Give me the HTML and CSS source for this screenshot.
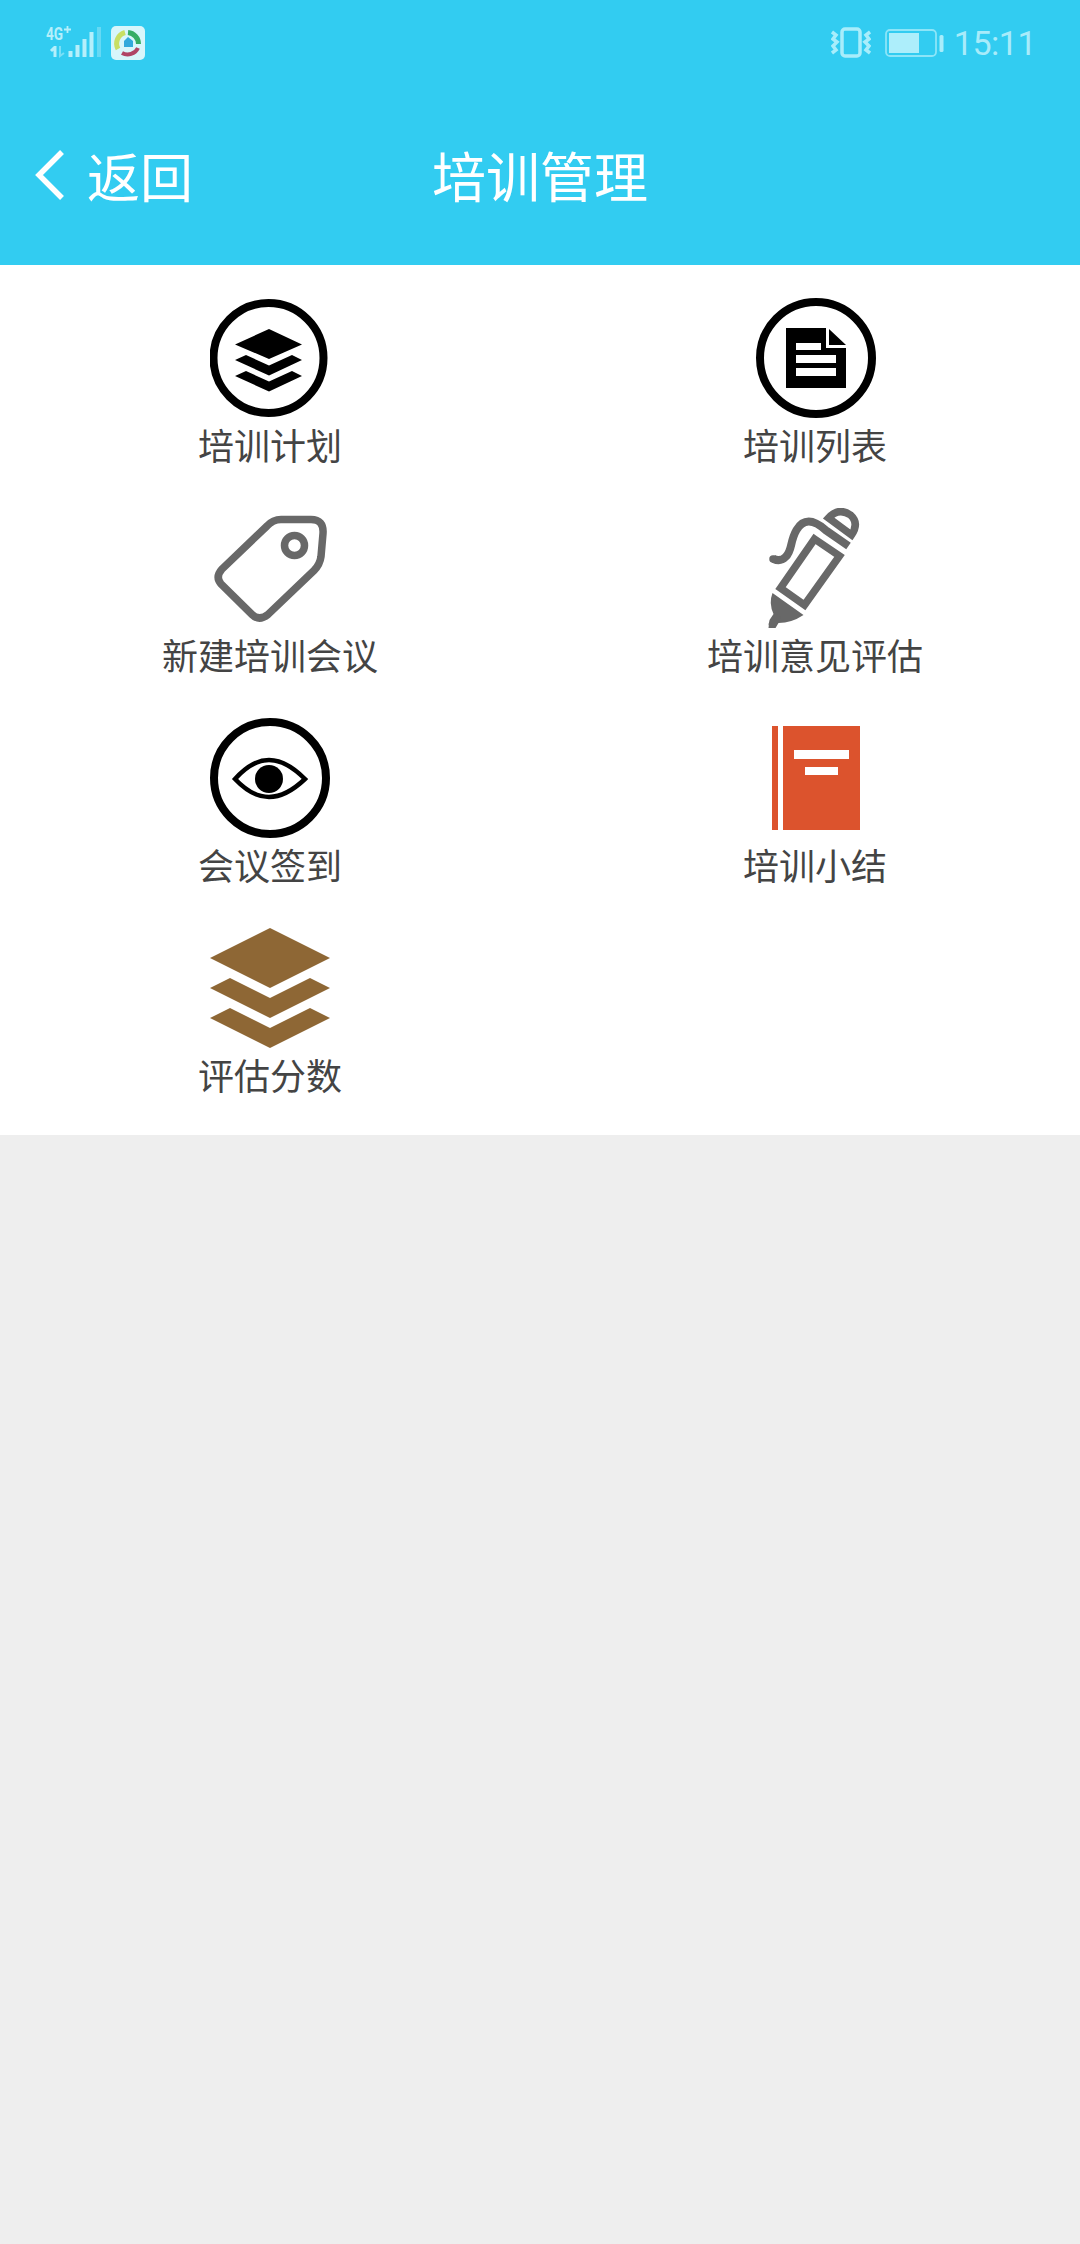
FILE: index.html
```
<!DOCTYPE html>
<html lang="zh-CN">
<head>
    <meta charset="UTF-8">
    <meta name="viewport" content="width=device-width, initial-scale=1.0">
    <title>培训管理</title>
    <link rel="stylesheet" href="styles.css">
</head>
<body>
    <header>
        <div class="status-bar">
            <div class="status-left">
                <svg width="60" height="40" viewBox="0 0 60 40" class="signal">
                    <text x="1" y="17" textLength="17" lengthAdjust="spacingAndGlyphs" class="net">4G</text>
                    <path d="M19 6.500h7M22.500 3v7" stroke="#b5effb" stroke-width="1.800"/>
                    <path d="M10 23v11M6 28l4-4" stroke="#b5effb" stroke-width="3" fill="none"/>
                    <path d="M15 23v10l4-3" stroke="#7adff6" stroke-width="2" fill="none"/>
                    <path d="M25.500 28v6M32.500 22v12M39.500 16v18M46.500 9v25" stroke="#b5effb" stroke-width="4"/>
                    <path d="M54 4v30" stroke="#66d9f4" stroke-width="4"/>
                </svg>
                <svg width="36" height="36" viewBox="0 0 36 36" class="app-icon">
                    <rect x="1" y="1" width="34" height="34" rx="5" fill="#d8f6fb"/>
                    <g fill="none" stroke-width="5">
                        <path d="M8 24A11.500 11.500 0 0 1 15 7.500" stroke="#c8df63"/>
                        <path d="M18 7.500A11.500 11.500 0 0 1 28.500 19" stroke="#36ad65"/>
                        <path d="M28 23A11.500 11.500 0 0 1 12 28" stroke="#b04465" stroke-width="4"/>
                    </g>
                    <path d="M14 16l4-4 5 4v6h-9z" fill="#31a9dc"/>
                </svg>
            </div>
            <div class="status-right">
                <svg width="40" height="32" viewBox="0 0 40 32" fill="none" stroke="#a8edfb">
                    <rect x="11" y="2" width="18" height="27" rx="3" stroke-width="3.500"/>
                    <path d="M1 5l4 3-3 4 4 3-4 4 3 4-4 3M39 5l-4 3 3 4-4 3 4 4-3 4 4 3" stroke-width="3.500"/>
                </svg>
                <svg width="60" height="30" viewBox="0 0 60 30">
                    <rect x="2" y="2" width="50" height="26" rx="4" fill="none" stroke="#8ce5f8" stroke-width="1.800"/>
                    <rect x="5" y="5" width="30" height="20" fill="#adeefb"/>
                    <rect x="55.500" y="7" width="4" height="17" rx="1.500" fill="#a8edfb"/>
                </svg>
                <span class="time">15:11</span>
            </div>
        </div>
        <nav>
            <a class="back">
                <svg width="32" height="54" viewBox="0 0 32 54">
                    <path d="M28 4L5 27l23 23" fill="none" stroke="#fff" stroke-width="5.500"/>
                </svg>
                <span>返回</span>
            </a>
            <h1>培训管理</h1>
        </nav>
    </header>

    <div class="menu">
        <a class="item">
            <svg viewBox="0 0 120 120">
                <circle cx="58.500" cy="60" r="55" fill="none" stroke="#000" stroke-width="8"/>
                <path d="M59 31l33 15.500L59 61 25 46.500zM36 57l23 10.500L82 57l10 5-33 15.500L25 62zM36 73l23 10.500L82 73l10 5-33 15.500L25 78z"/>
            </svg>
            <span>培训计划</span>
        </a>
        <a class="item">
            <svg viewBox="0 0 120 120">
                <circle cx="60" cy="60" r="56" fill="none" stroke="#000" stroke-width="8"/>
                <path d="M30 30h40v20h20v40H30z"/>
                <path d="M73 31l17 16H73z"/>
                <path d="M40 45h25v7H40zM40 57h40v8H40zM40 70h40v8H40z" fill="#fff"/>
            </svg>
            <span>培训列表</span>
        </a>
        <a class="item">
            <svg viewBox="0 0 120 120" fill="none" stroke="#686868" stroke-width="7.500">
                <path d="M71 11.500h30q13 0 12 14l-2 23q-1 8-7 14l-46 44q-9 7-16 0L11 76q-6-7 1-15l45-43q6-6.500 14-6.500z"/>
                <circle cx="84.500" cy="37.500" r="10"/>
            </svg>
            <span>新建培训会议</span>
        </a>
        <a class="item">
            <svg viewBox="0 0 120 120">
                <g transform="translate(12.500 0)" fill="none" stroke="#686868" stroke-width="7.500">
                    <path d="M60 10Q70-1 82 7q9 8 1 20z"/>
                    <path d="M80 38L57 22Q38 5 28 22c-7 12-4 21-11 27q-5 5-12 2" stroke-width="8"/>
                    <path d="M46 31L71 48 36 97 12 80z"/>
                    <path d="M4 85l31 22q-12 8-25 8l-3 5H0l1-8 4-6q-5-11-1-21z" fill="#686868" stroke="none"/>
                    <path d="M4 116l4-6M4.500 51h1" stroke-linecap="round"/>
                </g>
            </svg>
            <span>培训意见评估</span>
        </a>
        <a class="item">
            <svg viewBox="0 0 120 120">
                <circle cx="60" cy="60" r="56" fill="none" stroke="#000" stroke-width="8"/>
                <path d="M25 61Q42 42 59 42T95 61Q76 79 59 79T25 61z" fill="none" stroke="#000" stroke-width="4.500"/>
                <circle cx="59" cy="61" r="14"/>
            </svg>
            <span>会议签到</span>
        </a>
        <a class="item">
            <svg viewBox="0 0 120 120">
                <path d="M16 8h6v104h-6zM27 8h77v104H27z" fill="#dc532d"/>
                <path d="M38 32h55v9H38zM49 49h33v8H49z" fill="#fff"/>
            </svg>
            <span>培训小结</span>
        </a>
        <a class="item">
            <svg viewBox="0 0 120 120" fill="#8e6735">
                <path d="M60 0l60 30-60 30L0 30z"/>
                <path d="M20 50l40 20 40-20 20 10-60 30L0 60z"/>
                <path d="M20 80l40 20 40-20 20 10-60 30L0 90z"/>
            </svg>
            <span>评估分数</span>
        </a>
    </div>
</body>
</html>
```
FILE: styles.css
```
body {
    margin: 0;
    background-color: #eee;
    color: #444;
    font-family: "Noto Sans CJK SC", sans-serif;
}
header {
    height: 265px;
    background-color: #32ccf1;
    color: #fff;
}
.status-bar {
    display: flex;
    justify-content: space-between;
    align-items: center;
    box-sizing: border-box;
    height: 86px;
    padding: 0 44px 0 45px;
}
.status-left,
.status-right {
    display: flex;
    align-items: center;
}
.app-icon {
    margin-left: 5px;
}
.net {
    font: bold 19px "Roboto", sans-serif;
    fill: #b5effb;
}
.status-right svg {
    margin-right: 13px;
}
.status-right svg + svg {
    margin-right: 10px;
}
.time {
    font: 400 34px/40px "Roboto", sans-serif;
    letter-spacing: -0.5px;
    color: #a8ebfa;
}
nav {
    display: grid;
    grid-template-columns: 1fr auto 1fr;
    align-items: center;
    height: 178px;
}
.back {
    display: flex;
    align-items: center;
    padding-left: 34px;
    font-size: 53px;
    line-height: 78px;
}
.back span {
    margin-left: 21px;
}
h1 {
    margin: 0;
    font-size: 54px;
    font-weight: 400;
    line-height: 78px;
}

/* 菜单 */
.menu {
    display: grid;
    grid-template-columns: 1fr 1fr;
    grid-auto-rows: 210px;
    padding-top: 33px;
    height: 837px;
    background-color: #fff;
}
.item {
    display: flex;
    flex-direction: column;
    align-items: center;
    font-size: 36px;
    line-height: 53px;
}
.item:nth-child(even) {
    padding-left: 10px;
}
.item svg {
    width: 120px;
    height: 120px;
}
.item:nth-child(even) svg {
    margin-left: 2px;
}
```
